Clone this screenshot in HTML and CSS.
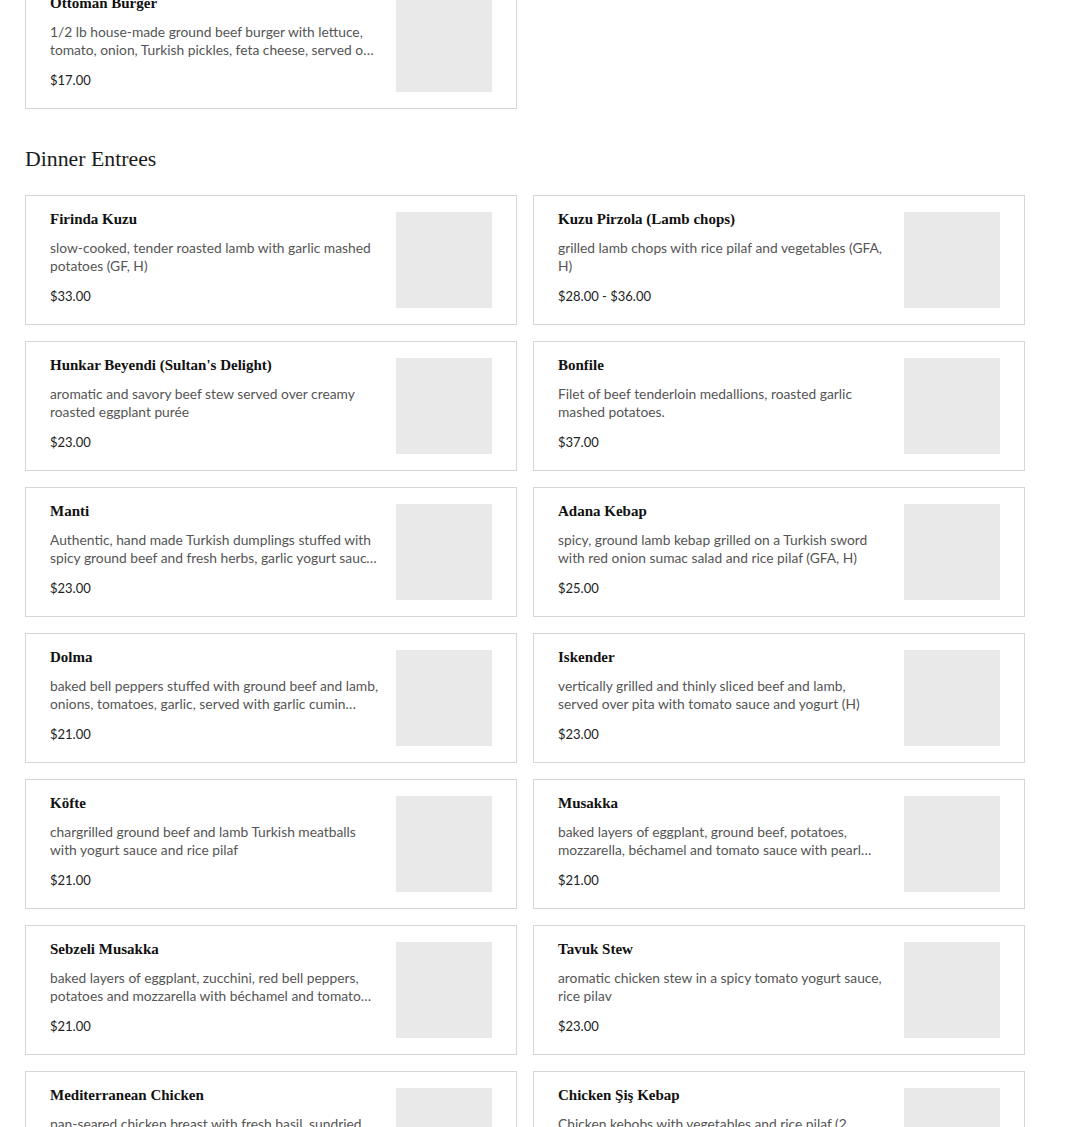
FILE: index.html
```html
<!DOCTYPE html>
<html>
<head>
<meta charset="utf-8">
<link rel="stylesheet" href="styles.css">
</head>
<body>
<main class="menu">
  <section class="section section-top">
    <div class="grid">
      <article class="card">
        <div class="info">
          <h3 class="name">Ottoman Burger</h3>
          <p class="desc">1/2 lb house-made ground beef burger with lettuce, tomato, onion, Turkish pickles, feta cheese, served on a toasted bun with fries</p>
          <p class="price">$17.00</p>
        </div>
        <div class="thumb"></div>
      </article>
    </div>
  </section>

  <section class="section">
    <h2 class="section-title">Dinner Entrees</h2>
    <div class="grid">
      <article class="card">
        <div class="info">
          <h3 class="name">Firinda Kuzu</h3>
          <p class="desc">slow-cooked, tender roasted lamb with garlic mashed potatoes (GF, H)</p>
          <p class="price">$33.00</p>
        </div>
        <div class="thumb"></div>
      </article>
      <article class="card">
        <div class="info">
          <h3 class="name">Kuzu Pirzola (Lamb chops)</h3>
          <p class="desc">grilled lamb chops with rice pilaf and vegetables (GFA, H)</p>
          <p class="price">$28.00 - $36.00</p>
        </div>
        <div class="thumb"></div>
      </article>
      <article class="card">
        <div class="info">
          <h3 class="name">Hunkar Beyendi (Sultan's Delight)</h3>
          <p class="desc">aromatic and savory beef stew served over creamy roasted eggplant purée</p>
          <p class="price">$23.00</p>
        </div>
        <div class="thumb"></div>
      </article>
      <article class="card">
        <div class="info">
          <h3 class="name">Bonfile</h3>
          <p class="desc">Filet of beef tenderloin medallions, roasted garlic mashed potatoes.</p>
          <p class="price">$37.00</p>
        </div>
        <div class="thumb"></div>
      </article>
      <article class="card">
        <div class="info">
          <h3 class="name">Manti</h3>
          <p class="desc">Authentic, hand made Turkish dumplings stuffed with spicy ground beef and fresh herbs, garlic yogurt sauce and spiced butter</p>
          <p class="price">$23.00</p>
        </div>
        <div class="thumb"></div>
      </article>
      <article class="card">
        <div class="info">
          <h3 class="name">Adana Kebap</h3>
          <p class="desc">spicy, ground lamb kebap grilled on a Turkish sword with red onion sumac salad and rice pilaf (GFA, H)</p>
          <p class="price">$25.00</p>
        </div>
        <div class="thumb"></div>
      </article>
      <article class="card">
        <div class="info">
          <h3 class="name">Dolma</h3>
          <p class="desc">baked bell peppers stuffed with ground beef and lamb, onions, tomatoes, garlic, served with garlic cumin yogurt sauce</p>
          <p class="price">$21.00</p>
        </div>
        <div class="thumb"></div>
      </article>
      <article class="card">
        <div class="info">
          <h3 class="name">Iskender</h3>
          <p class="desc">vertically grilled and thinly sliced beef and lamb, served over pita with tomato sauce and yogurt (H)</p>
          <p class="price">$23.00</p>
        </div>
        <div class="thumb"></div>
      </article>
      <article class="card">
        <div class="info">
          <h3 class="name">Köfte</h3>
          <p class="desc">chargrilled ground beef and lamb Turkish meatballs with yogurt sauce and rice pilaf</p>
          <p class="price">$21.00</p>
        </div>
        <div class="thumb"></div>
      </article>
      <article class="card">
        <div class="info">
          <h3 class="name">Musakka</h3>
          <p class="desc">baked layers of eggplant, ground beef, potatoes, mozzarella, béchamel and tomato sauce with pearl onions</p>
          <p class="price">$21.00</p>
        </div>
        <div class="thumb"></div>
      </article>
      <article class="card">
        <div class="info">
          <h3 class="name">Sebzeli Musakka</h3>
          <p class="desc">baked layers of eggplant, zucchini, red bell peppers, potatoes and mozzarella with béchamel and tomato sauce (V)</p>
          <p class="price">$21.00</p>
        </div>
        <div class="thumb"></div>
      </article>
      <article class="card">
        <div class="info">
          <h3 class="name">Tavuk Stew</h3>
          <p class="desc">aromatic chicken stew in a spicy tomato yogurt sauce, rice pilav</p>
          <p class="price">$23.00</p>
        </div>
        <div class="thumb"></div>
      </article>
      <article class="card">
        <div class="info">
          <h3 class="name">Mediterranean Chicken</h3>
          <p class="desc">pan-seared chicken breast with fresh basil, sundried tomatoes, mushrooms and garlic mashed potatoes</p>
          <p class="price">$24.00</p>
        </div>
        <div class="thumb"></div>
      </article>
      <article class="card">
        <div class="info">
          <h3 class="name">Chicken Şiş Kebap</h3>
          <p class="desc">Chicken kebobs with vegetables and rice pilaf (2 skewers) (GFA, H)</p>
          <p class="price">$22.00</p>
        </div>
        <div class="thumb"></div>
      </article>
    </div>
  </section>
</main>
</body>
</html>
```
FILE: styles.css
```css
* { box-sizing: border-box; }

html, body {
  margin: 0;
  padding: 0;
  background: #ffffff;
}

body {
  font-family: Lato, "Noto Sans", sans-serif;
  color: #222;
  overflow: hidden;
}

.menu {
  width: 1000px;
  margin: -21px 0 0 25px;
}

.section-top {
  margin-bottom: 36px;
}

.section-title {
  margin: 0 0 22px 0;
  font-family: "Liberation Serif", serif;
  font-weight: normal;
  font-size: 21.8px;
  line-height: 28px;
  color: #1a1a1a;
}

.grid {
  display: grid;
  grid-template-columns: 492px 492px;
  column-gap: 16px;
  row-gap: 16px;
}

.card {
  display: flex;
  align-items: flex-start;
  gap: 16px;
  height: 130px;
  padding: 16px 24px 16px 24px;
  border: 1px solid #d6d6d6;
  background: #fff;
}

.info {
  flex: 1;
  min-width: 0;
}

.name {
  margin: 0 0 13px 0;
  font-family: "Liberation Serif", serif;
  font-weight: bold;
  font-size: 15px;
  line-height: 14px;
  color: #111;
}

.desc {
  margin: 0 0 11px 0;
  font-size: 13.8px;
  line-height: 18px;
  color: #555;
  height: 36px;
  display: -webkit-box;
  -webkit-line-clamp: 2;
  -webkit-box-orient: vertical;
  overflow: hidden;
}

.price {
  margin: 0;
  font-size: 13px;
  line-height: 20px;
  color: #222;
}

.thumb {
  flex: none;
  width: 96px;
  height: 96px;
  background: #e9e9e9;
}
```
